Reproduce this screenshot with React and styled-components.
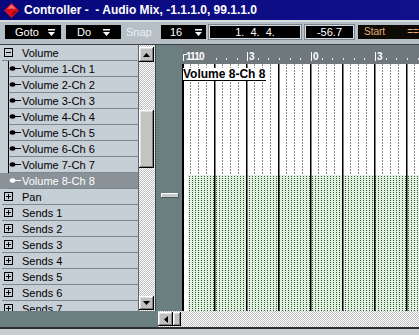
import styled, { createGlobalStyle } from 'styled-components';

const GlobalStyle = createGlobalStyle`
  html, body { margin: 0; padding: 0; }
  body {
    background: #c4c8c8;
    font-family: "Liberation Sans", Arial, sans-serif;
  }
`;

const SLATE = '#6b7f80';
const CHECKER = 'repeating-conic-gradient(#c0c0c0 0 25%, #ffffff 0 50%) 0 0 / 2px 2px';
const BEVEL = `
  background: #c0c0c0;
  box-shadow: inset -1px -1px #000, inset 1px 1px #fff,
    inset -2px -2px #808080, inset 2px 2px #dfdfdf;
`;

const Window = styled.div`
  width: 419px;
  height: 335px;
  overflow: hidden;
  display: flex;
  flex-direction: column;
  background: ${SLATE};
`;

const TitleBar = styled.div`
  flex: none;
  height: 20px;
  display: flex;
  align-items: center;
  gap: 5px;
  padding-left: 4px;
  background: linear-gradient(90deg, #08087c, #10108c);
  border-bottom: 2px solid #d4dadf;
`;

const Title = styled.span`
  color: #fff;
  font-weight: bold;
  font-size: 12px;
  white-space: pre;
`;

const Toolbar = styled.div`
  flex: none;
  height: 23px;
  box-sizing: border-box;
  display: flex;
  align-items: flex-start;
  padding: 3px 0 0 5px;
  background: #b6bec6;
  border-bottom: 1px solid #3a4246;
  overflow: hidden;
`;

const Field = styled.div`
  flex: none;
  width: ${p => p.$w}px;
  margin-left: ${p => p.$ml || 0}px;
  height: 14px;
  box-sizing: border-box;
  display: flex;
  align-items: center;
  justify-content: space-between;
  padding: 0 ${p => p.$pr || 0}px 0 ${p => p.$pl || 0}px;
  background: #000;
  color: #fff;
  font-size: 11px;
  line-height: 14px;
  white-space: pre;
`;

const ValueField = styled(Field)`
  justify-content: center;
  border: 1px solid #d4dce2;
  box-shadow: 0 0 0 1px #7c868c;
`;

const StartField = styled(Field)`
  justify-content: flex-start;
  gap: 22px;
  background: #0e0a06;
  color: #e6b274;
  font-size: 10px;
`;

const Label = styled.span`
  flex: none;
  width: ${p => p.$w}px;
  margin-left: ${p => p.$ml || 0}px;
  color: #eef2f5;
  font-size: 11px;
  line-height: 14px;
`;

const Body = styled.div`
  flex: none;
  height: 266px;
  display: flex;
`;

const ListPane = styled.div`
  flex: none;
  width: 138px;
  display: flex;
  flex-direction: column;
  overflow: hidden;
  background: #c6ced6;
  border-right: 1px solid #5c666c;
`;

const Row = styled.div`
  flex: none;
  height: 16px;
  box-sizing: border-box;
  display: flex;
  align-items: center;
  font-size: 11px;
  white-space: nowrap;
  color: ${p => (p.$selected ? '#fff' : '#000')};
  background:
    linear-gradient(#7c8890, #7c8890) no-repeat ${p => p.$indent}px 100% / 100% 1px,
    ${p => (p.$selected ? '#8a9298' : '#c6ced6')};
`;

const VScroll = styled.div`
  flex: none;
  width: 16px;
  box-sizing: border-box;
  display: flex;
  flex-direction: column;
  padding: 2px 1px 1px 0;
  background: ${CHECKER};
`;

const ArrowButton = styled.div`
  flex: none;
  width: 15px;
  height: ${p => p.$h || 15}px;
  margin-top: ${p => p.$mt || '0'};
  display: flex;
  align-items: center;
  justify-content: center;
  ${BEVEL}
`;

const ScrollThumb = styled.div`
  flex: none;
  width: 15px;
  height: ${p => p.$h}px;
  margin-top: ${p => p.$mt}px;
  background: #c4c4c0;
  box-shadow: inset -1px -1px #000, inset 1px 1px #fff,
    inset -2px -2px #808080, inset 2px 2px #dfdfdf;
`;

const ZoomStrip = styled.div`
  flex: none;
  width: 27px;
  box-sizing: border-box;
  padding: 148px 0 0 5px;
  border-left: 1px solid #3e4a4c;
`;

const ZoomThumb = styled.div`
  width: 18px;
  height: 5px;
  background: #c8cccc;
  box-shadow: inset -1px -1px #505858, inset 1px 1px #fff;
`;

const Canvas = styled.div`
  flex: 1;
  min-width: 0;
  display: flex;
  flex-direction: column;
`;

const Ruler = styled.svg`
  flex: none;
  display: block;
  background: #6f797c;
`;

const Track = styled.div`
  position: relative;
  flex: 1;
  overflow: hidden;
  background: #fff;
`;

const GridLayer = styled.svg`
  position: absolute;
  inset: 0;
  display: block;
`;

const TrackLabel = styled.div`
  position: relative;
  display: inline-block;
  margin: 1px 0 0 1px;
  padding-right: 1px;
  background: #fff;
  border-bottom: 1px solid #000;
  font-size: 12px;
  font-weight: bold;
  line-height: 12px;
  color: #000;
`;

const BottomBar = styled.div`
  flex: none;
  height: 16px;
  display: flex;
`;

const BottomSpacer = styled.div`
  flex: none;
  width: 158px;
`;

const HScroll = styled.div`
  flex: 1;
  display: flex;
  align-items: flex-start;
  padding-top: 1px;
  background: ${CHECKER};
`;

const HThumb = styled.div`
  flex: none;
  width: 8px;
  height: 14px;
  ${BEVEL}
`;

const Footer = styled.div`
  flex: none;
  height: 6px;
  border-top: 2px solid #2a2e30;
  background: #c8cccc;
`;

const Diamond = () => (
  <svg width="15" height="15" viewBox="0 0 15 15">
    <polygon points="7.5,0 15,7.5 7.5,15 0,7.5" fill="#d8101c" />
    <polygon points="7.5,1.5 3,6 7.5,5.5 12,6" fill="#ff6a6a" />
    <polygon points="13.5,7.5 7.5,13.5 9,9" fill="#900008" />
  </svg>
);

const DropArrow = () => (
  <svg width="7" height="7" viewBox="0 0 7 7">
    <rect x="0" y="0" width="7" height="1.5" fill="#fff" />
    <polygon points="0,3 7,3 3.5,7" fill="#fff" />
  </svg>
);

const Tri = ({ dir }) => {
  const pts = {
    up: '0,4 7,4 3.5,0',
    down: '0,0 7,0 3.5,4',
    left: '4,0 4,7 0,3.5',
  }[dir];
  const box = dir === 'left' ? [4, 7] : [7, 4];
  return (
    <svg width={box[0]} height={box[1]} viewBox={`0 0 ${box[0]} ${box[1]}`}>
      <polygon points={pts} fill="#000" />
    </svg>
  );
};

const Expander = ({ open }) => (
  <svg width="22" height="16" viewBox="0 0 22 16" style={{ flex: 'none' }}>
    <rect x="4.5" y="3.5" width="8" height="8" fill="none" stroke="#000" />
    <line x1="6" y1="7.5" x2="11" y2="7.5" stroke="#000" />
    {!open && <line x1="8.5" y1="5" x2="8.5" y2="10" stroke="#000" />}
  </svg>
);

const Branch = ({ last, light }) => {
  const c = light ? '#fff' : '#000';
  return (
    <svg width="22" height="16" viewBox="0 0 22 16" style={{ flex: 'none' }}>
      {!last && <line x1="8.5" y1="0" x2="8.5" y2="16" stroke="#000" />}
      <ellipse cx="12.5" cy="7.5" rx="2.8" ry="2.2" fill={c} />
      <line x1="14" y1="7.5" x2="21" y2="7.5" stroke={c} />
    </svg>
  );
};

const rows = [
  { name: 'Volume', group: true, open: true },
  ...Array.from({ length: 8 }, (_, i) => ({
    name: `Volume ${i + 1}-Ch ${i + 1}`,
    last: i === 7,
    selected: i === 7,
  })),
  { name: 'Pan', group: true },
  ...Array.from({ length: 7 }, (_, i) => ({ name: `Sends ${i + 1}`, group: true })),
];

const RULER_W = 237;
const majors = [2, 65, 129, 193, 257];
const majorLabels = [
  { x: 65, t: '3' },
  { x: 129, t: '0' },
  { x: 193, t: '3' },
];
const minors = majors.slice(0, -1).flatMap((m, i) => {
  const step = (majors[i + 1] - m) / 6;
  return [1, 2, 3, 4, 5].map(k => Math.round(m + k * step)).filter(x => x > 24);
});

const TRACK_H = 247;
const GREEN_TOP = 111;
const bars = Array.from({ length: 8 }, (_, i) => i * 32);
const RULER_FONT = 'Liberation Sans, Arial, sans-serif';

export default function App() {
  return (
    <>
      <GlobalStyle />
      <Window>
        <TitleBar>
          <Diamond />
          <Title>{'Controller -  - Audio Mix, -1.1.1.0, 99.1.1.0'}</Title>
        </TitleBar>

        <Toolbar>
          <Field $w={56} $pl={10} $pr={6}>Goto<DropArrow /></Field>
          <Field $w={55} $ml={5} $pl={11} $pr={11}>Do<DropArrow /></Field>
          <Label $w={27} $ml={5}>Snap</Label>
          <Field $w={45} $ml={8} $pl={9} $pr={4}>16<DropArrow /></Field>
          <ValueField $w={92} $ml={3}>{'1.  4.  4.'}</ValueField>
          <ValueField $w={49} $ml={4}>-56.7</ValueField>
          <StartField $w={70} $ml={4} $pl={6}><span>Start</span><span>===</span></StartField>
        </Toolbar>

        <Body>
          <ListPane>
            {rows.map(r => (
              <Row key={r.name} $selected={r.selected} $indent={r.group ? 2 : 8}>
                {r.group ? <Expander open={r.open} /> : <Branch last={r.last} light={r.selected} />}
                {r.name}
              </Row>
            ))}
          </ListPane>

          <VScroll>
            <ArrowButton><Tri dir="up" /></ArrowButton>
            <ScrollThumb $mt={48} $h={58} />
            <ArrowButton $h={14} $mt="auto"><Tri dir="down" /></ArrowButton>
          </VScroll>

          <ZoomStrip>
            <ZoomThumb />
          </ZoomStrip>

          <Canvas>
            <Ruler width={RULER_W} height="19" viewBox={`0 0 ${RULER_W} 19`}>
              <path d="M1.5 16 V9.5 H5" stroke="#fff" fill="none" />
              <text x="4" y="15" fill="#fff" fontSize="10" fontWeight="bold"
                fontFamily={RULER_FONT} letterSpacing="-0.9">1110</text>
              {majorLabels.map(m => (
                <g key={m.x}>
                  <rect x={m.x} y="7" width="1" height="9" fill="#fff" />
                  <text x={m.x + 2} y="15" fill="#fff" fontSize="10" fontWeight="bold"
                    fontFamily={RULER_FONT}>{m.t}</text>
                </g>
              ))}
              {minors.map(x => (
                <rect key={x} x={x} y="13" width="1" height="2" fill="#e8ecee" />
              ))}
            </Ruler>

            <Track>
              <GridLayer width={RULER_W} height={TRACK_H} viewBox={`0 0 ${RULER_W} ${TRACK_H}`}>
                <defs>
                  <pattern id="dots" width="3" height="2" patternUnits="userSpaceOnUse">
                    <rect width="3" height="2" fill="#e2f0e2" />
                    <rect x="1" y="0" width="1" height="1" fill="#2e5e2e" />
                  </pattern>
                </defs>
                {bars.flatMap(b => [8, 16, 24].map(o => (
                  <line key={`${b}-${o}`} x1={b + o + 0.5} y1="0" x2={b + o + 0.5} y2={GREEN_TOP}
                    stroke="#8a8a8a" strokeDasharray="2 1" />
                )))}
                <rect x="6" y={GREEN_TOP} width={RULER_W - 6} height={TRACK_H - GREEN_TOP} fill="url(#dots)" />
                {bars.map(b => (
                  <rect key={b} x={b} y="0" width={b === 0 ? 2 : 1.5} height={TRACK_H} fill="#000" />
                ))}
              </GridLayer>
              <TrackLabel>Volume 8-Ch 8</TrackLabel>
            </Track>
          </Canvas>
        </Body>

        <BottomBar>
          <BottomSpacer />
          <HScroll>
            <ArrowButton $h={14}><Tri dir="left" /></ArrowButton>
            <HThumb />
          </HScroll>
        </BottomBar>

        <Footer />
      </Window>
    </>
  );
}
